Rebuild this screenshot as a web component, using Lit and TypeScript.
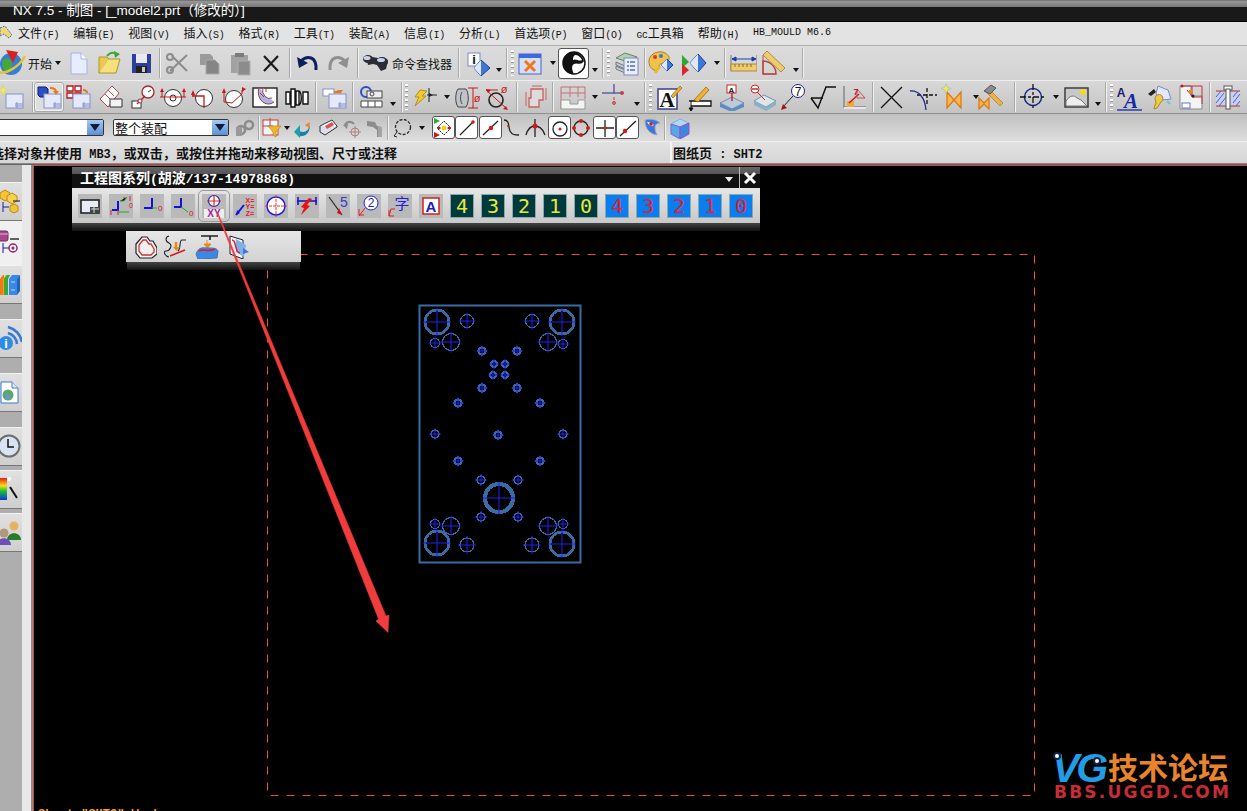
import { LitElement, html, svg, css } from 'lit';
import { customElement } from 'lit/decorators.js';

type Item = { c: number; n: string; w?: number; t?: string; mode?: 'on' | 'box' | 'wbox' };

const sheet = svg`<rect x="9" y="11" width="17" height="14" fill="#e4e9fb" stroke="#8592c8"/><path d="M18 21h8M18 23h8M20 19v6" stroke="#8592c8" fill="none"/>`;
const gray = '#8c8c8c';
const COMMA = '\uFF0C';

// toolbar icons, drawn on their row's own size
const icons: Record<string, unknown> = {
  globe: svg`<circle cx="13" cy="15" r="11" fill="#2f7fd8"/><path d="M5 11c4-3 8-1 9 3s-3 9-6 8-5-6-3-11z" fill="#46a83a"/><path d="M0 23c8 3 22-6 27-16" stroke="#e8c22c" stroke-width="2.5" fill="none"/><path d="M8 1l12 2-5 11z" fill="#d8201c"/>`,
  newfile: svg`<path d="M6 4h10l6 6v15H6z" fill="#e8ecff" stroke="#a4b0e4"/><path d="M16 4v6h6" fill="#fff" stroke="#a4b0e4"/>`,
  folder: svg`<path d="M4 24l3-14h18l-4 14z" fill="#f4e07c" stroke="#b09432"/><path d="M4 24V8h8l2 2" fill="#e8c850" stroke="#b09432"/><path d="M12 7c3-4 7-4 9-2" stroke="#38a838" stroke-width="2" fill="none"/><path d="M19 2l6 3-5 4z" fill="#38a838"/>`,
  save: svg`<rect x="5" y="5" width="19" height="19" fill="#2c3f9c"/><rect x="9" y="5" width="11" height="9" fill="#e8e8f4"/><rect x="9" y="17" width="11" height="7" fill="#222"/><rect x="15" y="18" width="3" height="5" fill="#c8c8c8"/>`,
  scissors: svg`<path d="M6 22L23 6M8 7l15 15" stroke="${gray}" stroke-width="2"/><circle cx="6" cy="8" r="3" fill="none" stroke="${gray}" stroke-width="2"/><circle cx="6" cy="21" r="3" fill="none" stroke="${gray}" stroke-width="2"/>`,
  copy: svg`<path d="M5 5h10l3 3v8h-13z" fill="#9a9a9a"/><path d="M11 11h9l4 4v10H11z" fill="#858585" stroke="#aaa"/>`,
  paste: svg`<rect x="5" y="6" width="17" height="18" fill="#a2a2a2"/><rect x="9" y="4" width="9" height="4" fill="#7c7c7c"/><rect x="12" y="12" width="12" height="14" fill="#8c8c8c" stroke="#b0b0b0"/>`,
  del: svg`<path d="M7 7l14 15M21 7L7 22" stroke="#1c1c1c" stroke-width="2.2"/>`,
  undo: svg`<path d="M8 12c6-6 16-5 15 9" fill="none" stroke="#0c1f5c" stroke-width="3"/><path d="M4 8l2 11 9-5z" fill="#0c1f5c"/>`,
  redo: svg`<path d="M20 12c-6-6-16-5-15 9" fill="none" stroke="#8f8f8f" stroke-width="3"/><path d="M24 8l-2 11-9-5z" fill="#8f8f8f"/>`,
  binoc: svg`<path d="M4 7l12 2 10 2-2 9-5 2-4-6-4-1-5 1z" fill="#2c2c34"/><ellipse cx="6" cy="10" rx="5" ry="4" fill="#2c2c34"/><ellipse cx="20" cy="13" rx="6" ry="5" fill="#2c2c34"/><ellipse cx="5" cy="9" rx="3.500" ry="2" fill="#c8d4ec"/><ellipse cx="19" cy="11" rx="4" ry="2" fill="#c8d4ec"/>`,
  info: svg`<rect x="5" y="4" width="12" height="13" fill="#fff" stroke="#7a88c8"/><text x="11" y="15" class="svgb" font-size="13" fill="#111" text-anchor="middle">i</text><path d="M18 11l9 8-9 8-7-8z" fill="#3c78d8" stroke="#1c3c8c"/><path d="M18 11v16l-7-8z" fill="#dfe8fb"/>`,
  window: svg`<rect x="3" y="5" width="22" height="20" fill="#d4e0fa" stroke="#4464c8"/><rect x="3" y="5" width="22" height="4" fill="#3c68e0"/><path d="M9 12l10 10M19 12L9 22" stroke="#f07818" stroke-width="3"/>`,
  half: svg`<circle cx="14" cy="14" r="11" fill="#fff" stroke="#111" stroke-width="1.500"/><path d="M14 3a11 11 0 0 0 0 22c-2-4-3-8 0-10s7 2 10-3C23 7 18 3 14 3z" fill="#111"/><path d="M15 6c3 0 6 2 7 5-3 2-6-2-9 0 0-2 0-4 2-5z" fill="#fff"/>`,
  stack: svg`<path d="M3 9l9-5 12 4-9 5z" fill="#a8d8a8" stroke="#777"/><path d="M3 13l9 4v3l-9-4zM3 17l9 4v3l-9-4z" fill="#c4ccd4" stroke="#777"/><rect x="11" y="9" width="14" height="17" fill="#e8eefc" stroke="#7c88c4"/><path d="M14 13h8M14 17h8M14 21h8" stroke="#5a6cb8" stroke-width="1.5" stroke-dasharray="2 1 5 0"/>`,
  palette: svg`<path d="M2 12c0-6 7-10 13-9s9 6 6 9-8 1-9 5-1 6-5 4-5-5-5-9z" fill="#efc24c" stroke="#a8802c"/><circle cx="8" cy="8" r="2" fill="#d83838"/><circle cx="14" cy="7" r="2" fill="#3878d8"/><path d="M20 10l6 6-6 6-6-6z" fill="#3c78d8" stroke="#1c3c8c"/><path d="M20 10v12l-6-6z" fill="#dfe8fb"/><path d="M8 24l5-7" stroke="#e8b830" stroke-width="3"/>`,
  play: svg`<path d="M3 6l7 7-7 6z" fill="#2ca838"/><path d="M3 15l7 6-7 6z" fill="#d82828"/><path d="M19 5l8 9-8 9-8-9z" fill="#3c78d8" stroke="#1c3c8c"/><path d="M19 5v18l-8-9z" fill="#dfe8fb"/>`,
  ruler: svg`<path d="M3 10h24M3 10l4-2v4zM27 10l-4-2v4z" fill="#1c3ca8" stroke="#1c3ca8"/><path d="M2 6v16M28 6v16" stroke="#777"/><rect x="2" y="15" width="26" height="7" fill="#f0cc70" stroke="#a88c3c"/><path d="M6 15v3M10 15v3M14 15v3M18 15v3M22 15v3" stroke="#886c28"/>`,
  square: svg`<path d="M4 25V12a13 13 0 0 1 13 13z" fill="none" stroke="#b84848" stroke-width="1.5"/><path d="M4 25h13M4 25V6" stroke="#b84848"/><path d="M8 2l18 17-4 4L4 6z" fill="#f0cc70" stroke="#a88c3c"/>`,

  newsheet: svg`${sheet}<path d="M6 2l1.500 4 4 1-4 1.500L6 13l-1.500-4.500-4-1.500 4-1z" fill="#f4ee50" stroke="#c8c87c" stroke-width=".5"/>`,
  viewsel: svg`<path d="M3 4h8l2 2v8H5l-2-2z" fill="#2c50c4" stroke="#0c1c6c"/>${sheet}<path d="M15 5c4 0 6 1 6 4" stroke="#e87818" fill="none" stroke-width="2"/><path d="M18 8h6l-3 4z" fill="#e87818"/>`,
  redgrid: svg`<path d="M3 3h6v5H3zM11 3h6v5h-6zM3 10h6v5H3zM11 10h6v5h-6z" fill="#fff" stroke="#b81818" stroke-width="1.300"/>${sheet}<path d="M19 7c3 0 4 1 4 3" stroke="#e87818" fill="none" stroke-width="2"/>`,
  diag: svg`<path d="M3 16L15 3l7 7L11 24z" fill="#fff" stroke="#b84848"/><path d="M8 11l6 6M11 7l6 6" stroke="#b84848"/><path d="M13 19h12v8H13z" transform="translate(0,-3)" fill="#f4f4f4" stroke="#333"/>`,
  circs: svg`<rect x="3" y="18" width="9" height="7" fill="#fff" stroke="#333"/><circle cx="19" cy="9" r="6" fill="#fff" stroke="#a82828" stroke-width="1.300"/><path d="M8 21L16 13" stroke="#a82828" stroke-width="1.500"/><circle cx="11" cy="18" r="2" fill="#fff" stroke="#a82828"/><path d="M19 9l3-2" stroke="#333"/>`,
  cen1: svg`<circle cx="14" cy="15" r="8.500" fill="#fff" stroke="#333"/><circle cx="14" cy="15" r="3" fill="none" stroke="#333"/><path d="M1 14h26M3 8v6M25 8v6" stroke="#c81818"/><path d="M3 5l2 4H1zM25 5l2 4h-4z" fill="#c81818"/>`,
  cen2: svg`<circle cx="15" cy="15" r="8.500" fill="#fff" stroke="#333"/><path d="M3 13h12v12" stroke="#c81818" fill="none" stroke-width="1.300"/><path d="M3 5l2 5H1z" fill="#c81818" transform="translate(1,2)"/><path d="M4 9v4" stroke="#c81818"/>`,
  cen3: svg`<circle cx="14" cy="16" r="8.500" fill="#fff" stroke="#333"/><path d="M4 9v10l8 1 10-9v-4" stroke="#c81818" fill="none"/><path d="M4 5l2 5H2zM22 4l4 2-4 3z" fill="#c81818"/>`,
  hatch: svg`<rect x="2" y="5" width="24" height="19" fill="#fff" stroke="#222" stroke-width="1.400"/><path d="M8 5a10 12 0 0 0 15 14" fill="#a4b8e8" stroke="#a83838"/><path d="M12 5a7 8 0 0 0 9 10" fill="#fff" stroke="#a83838"/><path d="M15 5v4M9 10l4 4" stroke="#a83838"/>`,
  shaft: svg`<path d="M3 9h4v12H3zM8 6h4v18H8zM13 8h3v14h-3zM16 8c3 2 3 12 0 14M20 9h5v12h-5z" fill="#fff" stroke="#111" stroke-width="1.400"/>`,
  sheetup: svg`<rect x="3" y="6" width="11" height="7" fill="#fff" stroke="#8592c8"/>${sheet}<path d="M14 9h5" stroke="#e87818" stroke-width="2"/><path d="M17 7h6l-3 4z" fill="#e87818"/>`,
  cfg: svg`<circle cx="8" cy="9" r="5" fill="none" stroke="#2c4cc8" stroke-width="2"/><rect x="9" y="8" width="15" height="7" fill="#eee" stroke="#444"/><circle cx="14" cy="11" r="2" fill="none" stroke="#444"/><path d="M3 18h21v6H3zM10 18v6M17 18v6" fill="#fff" stroke="#444"/>`,
  bolt: svg`<path d="M18 5v14M16 12h10" stroke="#222"/><path d="M22 12l-4-2v4z" fill="#222"/><path d="M9 7l7 1-5 5 4 0-11 10 4-9h-4z" fill="#f0cc28" stroke="#b88c20"/>`,
  dia1: svg`<path d="M5 6h8c3 4 3 14 0 18H5c-3-4-3-14 0-18z" fill="#c0c4c8" stroke="#444"/><path d="M9 9c-2 4-2 8 0 12" stroke="#444" fill="none"/><path d="M15 5h10M15 25h10M20 5v20" stroke="#c81818"/><text x="24" y="19" class="svgt" font-size="11" fill="#c81818" text-anchor="middle">ø</text>`,
  dia2: svg`<circle cx="13" cy="17" r="7" fill="none" stroke="#222" stroke-width="1.600"/><path d="M3 7l20 18M3 7h12" stroke="#c81818"/><text x="21" y="10" class="svgt" font-size="11" fill="#c81818" text-anchor="middle">ø</text><path d="M3 6l5 1-3 3zM25 27l-5-1 3-3z" fill="#c81818"/>`,
  step: svg`<path d="M8 7h12v11h-4v7H6v-9h2z" transform="translate(1,-1)" fill="#dcdcdc" stroke="#c86060" stroke-width="1.300"/><path d="M4 9v14M24 5v12M10 3h10" stroke="#c86060"/>`,
  prof: svg`<path d="M3 4h24M3 10h24M3 4v22M12 4v10M20 4v10M27 4v12" stroke="#c47070" fill="none"/><path d="M3 17h9v4h8v-4h7v9H3z" fill="#f4f4f4" stroke="#999"/>`,
  axis: svg`<path d="M1 10h20M13 1v10" stroke="#6060a8" stroke-width="1.500"/><circle cx="21" cy="10" r="2" fill="#c84040"/><path d="M13 14v8" stroke="#c84040" stroke-dasharray="3 1"/><circle cx="13" cy="20" r="1.500" fill="none" stroke="#c84040"/>`,
  note: svg`<rect x="4" y="6" width="19" height="20" fill="#fff" stroke="#3c3c8c" stroke-width="1.500"/><text x="13" y="24" class="svgs" font-size="21" fill="#111" text-anchor="middle">A</text><path d="M17 13L26 3l2 2-9 10z" fill="#f0b030" stroke="#8c6010" stroke-width=".7"/>`,
  pen: svg`<path d="M5 18h22v5H7" fill="#fff" stroke="#111" stroke-width="1.300"/><path d="M7 18v9M5 25l2 3 2-3z" stroke="#111"/><path d="M10 17L22 4l3 3-11 12z" fill="#f0b030" stroke="#8c6010" stroke-width=".7"/>`,
  datum: svg`<path d="M2 20l12-6 12 6-12 6z" fill="#bccadc" stroke="#7c8ca0"/><path d="M2 20v4l12 5 12-5v-4l-12 6z" fill="#5c8cc4"/><rect x="9" y="2" width="9" height="8" fill="#fff" stroke="#c82828"/><text x="13.500" y="9.500" class="svgb" font-size="8" fill="#222" text-anchor="middle">A</text><path d="M14 10v8" stroke="#c82828" stroke-width="1.500"/>`,
  minus: svg`<path d="M6 18l10-6 12 6-10 6z" fill="#dce6ee" stroke="#7c8ca0"/><path d="M6 18v4l12 6 10-6v-4l-10 6z" fill="#8cb0c8"/><circle cx="7" cy="6" r="4" fill="#fff" stroke="#c82828"/><path d="M4 6h6" stroke="#c82828" stroke-width="1.500"/><path d="M9 9l8 8" stroke="#c82828"/>`,
  seven: svg`<circle cx="19" cy="8" r="6.500" fill="#fff" stroke="#22228c"/><text x="19" y="12.500" class="svgt" font-size="12" fill="#111" text-anchor="middle">7</text><path d="M14 13L3 25" stroke="#222"/><path d="M2 27l2-6 4 4z" fill="#a81818"/>`,
  root: svg`<path d="M2 15l7 10L17 4h10" stroke="#111" stroke-width="1.500" fill="none"/><path d="M2 15h12" stroke="#111" stroke-width="1.500"/>`,
  angle: svg`<path d="M5 3v21h22" stroke="#888" stroke-width="1.500" fill="none"/><rect x="5" y="24" width="22" height="2" fill="#e4e4f4"/><rect x="8" y="18" width="7" height="6" fill="#f0a838"/><path d="M10 20l10-9" stroke="#c81818" stroke-width="1.500"/><path d="M18 6l8 9h-8z" fill="none" stroke="#c85050"/><text x="17" y="12" class="svgb" font-size="9" fill="#c81818" text-anchor="middle">7</text>`,
  cross: svg`<path d="M4 4l21 21M25 4L4 25" stroke="#111" stroke-width="1.300"/>`,
  crossarc: svg`<path d="M18 5v18M8 12h20" stroke="#111" stroke-dasharray="4 2" stroke-width="1.300"/><path d="M1 8c8-1 15 6 16 19" stroke="#1c2c8c" stroke-width="1.300" fill="none"/>`,
  bow: svg`<path d="M10 12l7 8 7-8v16l-7-8-7 8z" transform="translate(-2,-3)" fill="#f8b848" stroke="#e07818" stroke-width="1.300"/><path d="M7 1l1.500 3.500 3.500 1-3.500 1.500L7 11 5.500 7 2 5.500l3.500-1z" fill="#e8ee50" stroke="#a8a8a8" stroke-width=".5"/>`,
  bowham: svg`<path d="M3 15l5 5 5-5v11l-5-5-5 5z" fill="#f8b848" stroke="#e07818" stroke-width="1.300"/><path d="M13 6l14 14-3 3L10 9z" fill="#f0b048" stroke="#a87820" stroke-width=".7"/><path d="M8 8l7-6 5 3-6 6z" fill="#8c8c8c" stroke="#555"/>`,
  target: svg`<circle cx="14" cy="14" r="8.500" fill="none" stroke="#1c2c8c" stroke-width="1.500"/><path d="M1 14h26M14 1v26" stroke="#111" stroke-dasharray="6 2 3 2" stroke-width="1.300"/>`,
  photo: svg`<rect x="2" y="5" width="23" height="19" fill="#c8c8c8" stroke="#333" stroke-width="1.400"/><path d="M3 23v-5c4-6 8-6 11-3l4 2 6 6z" fill="#eee" stroke="#777"/><circle cx="20" cy="9" r="3" fill="#f8d818"/>`,
  aa: svg`<text x="6" y="14" class="svgb" font-size="12" fill="#1c1c70" text-anchor="middle">A</text><text x="16" y="25" class="svgi" font-size="21" fill="#1428a8" text-anchor="middle">A</text><path d="M2 27h25" stroke="#1428a8" stroke-width="1.300"/>`,
  keys: svg`<path d="M13 3l10 4 3 9-9 1-6-6z" fill="#e4e8ff" stroke="#7c88c8"/><path d="M3 11l6-5 2 3-5 4z" fill="#222"/><path d="M10 16a4 4 0 1 1 6 3l-4 6-3 1 1-4 1-2z" fill="#f0c848" stroke="#a88c28"/><path d="M22 18l3 3" stroke="#6ec8c8" stroke-width="2"/>`,
  frame: svg`<path d="M4 3h11v10h11v13H4z" fill="#f4f4f4" stroke="#888"/><rect x="6" y="20" width="8" height="5" fill="#fff" stroke="#6478c8"/><path d="M6 3h20v18M16 3v11h10M16 13l-5-6" fill="none" stroke="#c83030"/><circle cx="6" cy="3" r="1.500" fill="#c81818"/><circle cx="17" cy="13" r="1.500" fill="#222"/><rect x="13" y="7" width="3" height="3" fill="#f08818"/>`,
  bolt2: svg`<rect x="2" y="8" width="24" height="15" fill="#c8d0f0"/><path d="M2 20l8-10M2 14l5-6M5 23l8-10M19 20l7-9M19 14l5-6M22 23l4-5" stroke="#5060c8"/><path d="M2 8h24M2 23h24" stroke="#b83030"/><rect x="10" y="3" width="8" height="4" fill="#fff" stroke="#555"/><rect x="12" y="6" width="4" height="20" fill="#fff" stroke="#555"/>`,

  nx: svg`<path d="M0 3l5-2 7 9-3 3-5-4-4 2z" fill="#f0d870" stroke="#446cc8" stroke-dasharray="2 1"/>`,
  link: svg`<circle cx="7" cy="13" r="4" fill="none" stroke="#8c8c8c" stroke-width="2.500"/><circle cx="15" cy="8" r="4" fill="none" stroke="#8c8c8c" stroke-width="2.500"/><rect x="2" y="10" width="6" height="9" fill="#999"/>`,
  filter: svg`<rect x="2" y="3" width="15" height="15" fill="#f4f4f4" stroke="#c04040"/><path d="M9 1v10M2 9h10" stroke="#c04040"/><path d="M7 9h13l-5 6v5l-3-2v-3z" fill="#f0b828" stroke="#a08020" stroke-width=".6"/>`,
  back: svg`<path d="M7 13c5 4 11 2 12-6 0 9-4 13-12 12z" fill="#1880a8"/><path d="M9 8l-6 7 6 6z" fill="#20a0a8"/><path d="M14 8l5-3-1 6z" fill="#e88828"/>`,
  box3d: svg`<path d="M3 9l12-6 5 6-12 8z" fill="#fff" stroke="#333"/><path d="M3 9v6l5 3 12-8V9" fill="#dde" stroke="#333"/><path d="M8 9l7-4 2 3-7 4z" fill="#e05050"/>`,
  g1: svg`<path d="M5 8c2-4 7-4 9-1" stroke="#8c8c8c" stroke-width="2.200" fill="none"/><path d="M3 8l5-1-1 5z" fill="#8c8c8c"/><circle cx="15" cy="15" r="4" fill="none" stroke="#b08080"/><path d="M15 9v12M9 15h12" stroke="#b08080"/>`,
  g2: svg`<path d="M3 4l8 1 2 4 5 1v10h-5v-7l-4-3-6-1z" fill="#8c8c8c"/><path d="M14 10h4v10h-4z" fill="#a4a4a4"/>`,
  lasso: svg`<circle cx="12" cy="10" r="7.500" fill="none" stroke="#222" stroke-dasharray="3 1.500" stroke-width="1.300"/><path d="M6 15l-3 4 3 1" stroke="#222" fill="none"/>`,
  snapset: svg`<path d="M1 1l6 3-6 3z" fill="#2ca838"/><path d="M1 15l6 3-6 3z" fill="#c81818"/><path d="M11 4l7 7-7 7-7-7z" fill="#fff" stroke="#222" stroke-dasharray="2 1"/><circle cx="11" cy="11" r="2.500" fill="#f0d020"/><circle cx="6" cy="11" r="1.500" fill="#c81818"/><circle cx="16" cy="11" r="1.500" fill="#c81818"/>`,
  end1: svg`<path d="M4 18L17 5" stroke="#222" stroke-width="1.300"/><circle cx="17" cy="5" r="1.800" fill="#d81818"/>`,
  mid1: svg`<path d="M3 18L18 4" stroke="#222" stroke-width="1.300"/><circle cx="11" cy="11" r="2.200" fill="#d81818"/>`,
  curve: svg`<path d="M3 3c6 0 4 7 6 11 2 4 5 4 9 4" stroke="#222" stroke-width="1.300" fill="none"/><circle cx="7" cy="9" r="1" fill="#d81818"/>`,
  inter: svg`<path d="M2 18C4 11 8 9 11 9s8 2 10 9M11 2v18" stroke="#222" stroke-width="1.300" fill="none"/><circle cx="11" cy="9" r="2.500" fill="#d81818"/>`,
  cent: svg`<circle cx="11" cy="12" r="7" fill="none" stroke="#222" stroke-width="1.300"/><circle cx="11" cy="12" r="1.500" fill="#d81818"/>`,
  quad: svg`<circle cx="11" cy="11" r="7" fill="none" stroke="#222" stroke-width="1.300"/><circle cx="11" cy="4" r="2" fill="#d81818"/><circle cx="11" cy="18" r="2" fill="#d81818"/><circle cx="4" cy="11" r="2" fill="#d81818"/><circle cx="18" cy="11" r="2" fill="#d81818"/>`,
  plus: svg`<path d="M11 3v17M2 11h18" stroke="#222" stroke-width="1.300"/><circle cx="11" cy="11" r="1.500" fill="#d81818"/>`,
  low: svg`<path d="M3 19L19 4" stroke="#222" stroke-width="1.300"/><circle cx="8" cy="14" r="2.200" fill="#d81818"/>`,
  surf: svg`<path d="M5 3c6-2 12 0 15 3-6 0-6 6-3 12-6-1-12-5-12-15z" fill="#3878e0" stroke="#a8a8a8"/><path d="M7 5c3 0 5 1 7 3-2 2-5 1-7-3z" fill="#e8f0ff"/><circle cx="11" cy="7" r="1.800" fill="#d81818"/>`,
  cube: svg`<path d="M3 7l9-5 9 4-9 4z" fill="#b4d8f4" stroke="#7cb0e0"/><path d="M3 7v10l9 5V10z" fill="#58a8e8" stroke="#6c6cd0"/><path d="M12 10v12l9-5V6z" fill="#3c88e0" stroke="#a04cc8"/>`,
};

// floating window icons on 24px tiles
const tiles: Record<string, unknown> = {
  t1: svg`<rect x="3" y="6" width="18" height="13" fill="#e8ecf8" stroke="#222" stroke-width="1.600"/><rect x="12" y="13" width="9" height="6" fill="#444"/><path d="M13 15h8M16 13v6" stroke="#ddd"/>`,
  t2: svg`<path d="M9 7v9H3" stroke="#1010e0" stroke-width="2" fill="none"/><path d="M15 3v3M9 16v5M2 16v5M21 2v5" stroke="#e02020"/><path d="M11 7h4l3-4M9 18h11" stroke="#20b020"/><text x="20" y="14" class="svgt" font-size="7" fill="#d02020">0</text>`,
  t3: svg`<path d="M12 4v10H4" stroke="#1010e0" stroke-width="2" fill="none"/><path d="M12 14h5" stroke="#20b020"/><text x="18" y="17" class="svgt" font-size="8" fill="#d02020">0</text>`,
  t4: svg`<path d="M10 4v9H3" stroke="#1010e0" stroke-width="2" fill="none"/><path d="M10 13l7 5" stroke="#20b020"/><text x="18" y="22" class="svgt" font-size="8" fill="#d02020">0</text>`,
  t5: svg`<circle cx="12" cy="7" r="5.500" fill="#fff" stroke="#2020c0" stroke-width="1.200"/><path d="M5 7h14M12 1v12" stroke="#e02020" stroke-width="1.200"/><rect x="2" y="15" width="20" height="9" fill="#eee"/><text x="12" y="23" class="svgb" font-size="10" fill="#a020a0" text-anchor="middle">XY</text>`,
  t6: svg`<path d="M3 21L11 11" stroke="#1010e0" stroke-width="2"/><path d="M3 21l1-5 3 3z" fill="#1010e0"/><text x="17" y="9" class="svgb" font-size="7" fill="#e02020" text-anchor="middle">X=</text><text x="17" y="15" class="svgb" font-size="7" fill="#e02020" text-anchor="middle">Y=</text><text x="17" y="22" class="svgb" font-size="7" fill="#e02020" text-anchor="middle">Z=</text>`,
  t7: svg`<circle cx="12" cy="12" r="9" fill="#fff" stroke="#2020e0" stroke-width="1.500"/><path d="M1 12h22M12 1v22" stroke="#f03030" stroke-dasharray="3 1"/>`,
  t8: svg`<path d="M2 7h20M3 3v8M21 3v8" stroke="#1010c0" stroke-width="1.500"/><path d="M14 4l3 1-5 6 3 1-9 9 3-7-3-1z" fill="#e81010"/>`,
  t9: svg`<path d="M3 3l13 18" stroke="#222" stroke-width="1.200"/><path d="M13 14l3 7-5-2z" fill="#d01010"/><text x="18" y="13" class="svgt" font-size="14" fill="#3838d0" text-anchor="middle">5</text>`,
  t10: svg`<circle cx="14" cy="9" r="7" fill="#fff" stroke="#2020e0"/><text x="14" y="13" class="svgt" font-size="12" fill="#2020e0" text-anchor="middle">2</text><path d="M8 14L2 22" stroke="#e02020"/><path d="M2 15v6h5" stroke="#e02020" fill="none"/>`,
  t11: svg`<text x="14" y="15" class="svgc" font-size="15" fill="#2020e0" text-anchor="middle">字</text><path d="M3 15L1 22M3 15h4" stroke="#e02020" fill="none"/><path d="M1 16v6h5" stroke="#e02020" fill="none"/>`,
  t12: svg`<rect x="4" y="4" width="16" height="16" fill="#fff" stroke="#d02020" stroke-width="1.500"/><text x="12" y="18" class="svgb" font-size="15" fill="#2020c0" text-anchor="middle">A</text>`,
  s1: svg`<path d="M3 9l6-7h5l3 4h3l4 7v6l-5 4H7l-4-5z" fill="#f0f0f0" stroke="#222" stroke-width="1.200"/><path d="M6 10l4-5h3l3 4h2l3 5v3l-3 3H9l-3-4z" fill="none" stroke="#c83838" stroke-width="1.300"/>`,
  s2: svg`<path d="M5 1C1 2 1 6 5 8s1 8-3 8 0 6 3 6" stroke="#222" fill="none" stroke-width="1.100"/><path d="M22 5h-4c-3 0-1 9-4 11" stroke="#222" fill="none" stroke-width="1.100"/><path d="M12 7v6" stroke="#e88818" stroke-width="2.500"/><path d="M9 12h7l-3.500 4z" fill="#e88818"/><path d="M6 21l15-6" stroke="#d81818" stroke-width="1.500"/>`,
  s3: svg`<path d="M6 1h17M15 1v4" stroke="#222" stroke-width="1.600"/><path d="M12 5v4M9 9h7l-3.500 4z" stroke="#e88818" fill="#e88818"/><path d="M1 19c3-8 8-6 12-6 5 0 9 0 10 3l-1 7-19 1z" fill="#3c88e8" stroke="#5070a8"/><path d="M4 16c6-3 8 2 16-2" stroke="#e81818" stroke-width="1.500" fill="none"/>`,
  s4: svg`<path d="M4 1l13 4v19L4 19z" fill="#f0f4ff" stroke="#222"/><path d="M10 4l10 6-2 12-8-5z" fill="#80b0e8"/><path d="M6 5c5 0 2 12 8 13" stroke="#e02020" stroke-width="1.500" fill="none"/><path d="M17 13l6 4-6 2z" fill="#4078d0"/>`,
};

const sideArt = [
  svg`<path d="M0 6l5-3 5 3v5l-5 3-5-3z" fill="#f4c434" stroke="#b88c18"/><path d="M7 9l5-3 5 3v5l-5 3-5-3z" fill="#f8d050" stroke="#b88c18"/><path d="M3 15v10M3 20h6" stroke="#1c1c9c" fill="none"/><path d="M10 19l4-2 4 2v5l-4 2-4-2z" fill="#f4c434" stroke="#b88c18"/><path d="M13 14h7" stroke="#111"/>`,
  svg`<rect x="-2" y="5" width="10" height="10" rx="2" fill="#a8488c" stroke="#6c2c5c"/><path d="M-1 8h9" stroke="#e0b0d0"/><path d="M10 13h9" stroke="#111" stroke-width="1.300"/><path d="M3 17v10M3 22h6" stroke="#1c1c9c" fill="none"/><circle cx="13" cy="22" r="4" fill="none" stroke="#8c2870" stroke-width="1.500"/><circle cx="13" cy="22" r="1.500" fill="#8c2870"/>`,
  svg`<path d="M0 9l3-4h1v20H0z" fill="#f07818"/><path d="M3 9l3-4h3l-3 4v16H3z" fill="#e8a818"/><path d="M4 9l3-4h3l-2 4v16H4z" fill="#38a838"/><path d="M9 9l3-4h8l-3 4v16H9z" fill="#3888e8"/><path d="M17 9l3-4v16l-3 4z" fill="#1c64b8"/><path d="M11 12h4M11 20h4" stroke="#bcd8f8"/>`,
  svg`<path d="M8 9a13 13 0 0 1 9 11" stroke="#3878d8" stroke-width="2.500" fill="none"/><path d="M8 3a19 19 0 0 1 14 15" stroke="#3878d8" stroke-width="2.500" fill="none"/><circle cx="6" cy="19" r="7" fill="#2c8ce8"/><text x="6" y="24" class="svgb" font-size="13" fill="#fff" text-anchor="middle">i</text>`,
  svg`<path d="M1 4h11l6 6v15H1z" fill="#fff" stroke="#3878d8"/><path d="M12 4v6h6" fill="#e4ecfa" stroke="#3878d8"/><circle cx="8" cy="17" r="5.500" fill="#58a868"/><path d="M5 21l3-7 4 7z" fill="#6c98c8"/>`,
  svg`<circle cx="9" cy="14" r="10.500" fill="#d8e4f4" stroke="#6c6c6c" stroke-width="2"/><path d="M8 7v8h6" stroke="#111" stroke-width="1.500" fill="none"/>`,
  svg`<defs><linearGradient id="rainbow" x1="0" y1="0" x2="0" y2="1"><stop offset="0" stop-color="#f01818"/><stop offset=".35" stop-color="#f0e018"/><stop offset=".6" stop-color="#18c030"/><stop offset="1" stop-color="#1030e0"/></linearGradient></defs><path d="M0 3h7v22H0z" fill="url(#rainbow)"/><path d="M10 12l7 11" stroke="#111" stroke-width="2"/><circle cx="9" cy="4" r="2" fill="#fff"/>`,
  svg`<circle cx="14" cy="8" r="4.500" fill="#e8b060"/><path d="M7 22c0-9 14-9 14 0z" fill="#287c28"/><circle cx="4" cy="15" r="4.500" fill="#b09878"/><path d="M-3 27c0-9 14-9 14 0z" fill="#7050b8"/>`,
];

const row1: Item[] = [
  { c: 11, n: 'globe', w: 30 }, { c: 40, n: 'text', w: 24, t: '开始' }, { c: 57, n: 'arrow' }, { c: 79, n: 'newfile' }, { c: 109, n: 'folder' }, { c: 141, n: 'save' },
  { c: 160, n: 'sep' }, { c: 178, n: 'scissors' }, { c: 209, n: 'copy' }, { c: 240, n: 'paste' }, { c: 271, n: 'del' }, { c: 290, n: 'sep' },
  { c: 307, n: 'undo' }, { c: 339, n: 'redo' }, { c: 358, n: 'sep' }, { c: 376, n: 'binoc' }, { c: 422, n: 'text', w: 60, t: '命令查找器' }, { c: 459, n: 'sep' },
  { c: 477, n: 'info' }, { c: 498, n: 'arrowLow' }, { c: 507, n: 'sep' }, { c: 512, n: 'dots' }, { c: 530, n: 'window' }, { c: 552, n: 'arrow' },
  { c: 573, n: 'half', mode: 'wbox' }, { c: 594, n: 'arrowLow' }, { c: 603, n: 'sep' }, { c: 608, n: 'dots' }, { c: 627, n: 'stack' }, { c: 645, n: 'sep' },
  { c: 661, n: 'palette' }, { c: 693, n: 'play' }, { c: 716, n: 'arrow' }, { c: 725, n: 'sep' }, { c: 743, n: 'ruler' }, { c: 773, n: 'square' }, { c: 795, n: 'arrowLow' }, { c: 803, n: 'sep' },
];

const row2: Item[] = [
  { c: 11, n: 'newsheet' }, { c: 33, n: 'sep' }, { c: 49, n: 'viewsel', mode: 'on' }, { c: 78, n: 'redgrid' }, { c: 111, n: 'diag' }, { c: 143, n: 'circs' },
  { c: 173, n: 'cen1' }, { c: 203, n: 'cen2' }, { c: 234, n: 'cen3' }, { c: 265, n: 'hatch' }, { c: 297, n: 'shaft' }, { c: 316, n: 'sep' },
  { c: 334, n: 'sheetup' }, { c: 353, n: 'sep' }, { c: 372, n: 'cfg' }, { c: 392, n: 'arrowLow' }, { c: 402, n: 'sep' }, { c: 406, n: 'dots' }, { c: 425, n: 'bolt' }, { c: 446, n: 'arrow' },
  { c: 467, n: 'dia1' }, { c: 497, n: 'dia2' }, { c: 517, n: 'sep' }, { c: 536, n: 'step' }, { c: 553, n: 'sep' }, { c: 572, n: 'prof' }, { c: 594, n: 'arrow' },
  { c: 615, n: 'axis' }, { c: 636, n: 'arrowLow' }, { c: 645, n: 'sep' }, { c: 650, n: 'dots' }, { c: 668, n: 'note' }, { c: 698, n: 'pen' }, { c: 732, n: 'datum' },
  { c: 762, n: 'minus' }, { c: 793, n: 'seven' }, { c: 823, n: 'root' }, { c: 853, n: 'angle' }, { c: 873, n: 'sep' }, { c: 891, n: 'cross' }, { c: 923, n: 'crossarc' },
  { c: 953, n: 'bow' }, { c: 975, n: 'arrow' }, { c: 990, n: 'bowham' }, { c: 1015, n: 'sep' }, { c: 1033, n: 'target' }, { c: 1055, n: 'arrow' }, { c: 1077, n: 'photo' },
  { c: 1097, n: 'arrowLow' }, { c: 1106, n: 'sep' }, { c: 1111, n: 'dots' }, { c: 1129, n: 'aa' }, { c: 1159, n: 'keys' }, { c: 1190, n: 'frame' }, { c: 1210, n: 'sep' }, { c: 1228, n: 'bolt2' },
];

const row3: Item[] = [
  { c: 50, n: 'combo', w: 108, t: '' }, { c: 171, n: 'combo', w: 116, t: '整个装配' }, { c: 245, n: 'link' }, { c: 259, n: 'sep' }, { c: 272, n: 'filter' }, { c: 286, n: 'arrow' },
  { c: 302, n: 'back' }, { c: 328, n: 'box3d' }, { c: 351, n: 'g1' }, { c: 375, n: 'g2' }, { c: 388, n: 'sep' }, { c: 402, n: 'lasso' }, { c: 421, n: 'arrow' },
  { c: 443, n: 'snapset', mode: 'box' }, { c: 466, n: 'end1', mode: 'box' }, { c: 490, n: 'mid1', mode: 'box' }, { c: 512, n: 'curve' }, { c: 535, n: 'inter' },
  { c: 559, n: 'cent', mode: 'box' }, { c: 581, n: 'quad' }, { c: 604, n: 'plus', mode: 'box' }, { c: 627, n: 'low', mode: 'box' }, { c: 651, n: 'surf' }, { c: 665, n: 'sep' }, { c: 679, n: 'cube' },
];

const menus: [string, string][] = [
  ['文件', '(F)'], ['编辑', '(E)'], ['视图', '(V)'], ['插入', '(S)'], ['格式', '(R)'], ['工具', '(T)'], ['装配', '(A)'],
  ['信息', '(I)'], ['分析', '(L)'], ['首选项', '(P)'], ['窗口', '(O)'],
];

const holes = [
  ...[[467, 321, 6.5], [532, 321, 6.5], [451, 342, 8.5], [548, 342, 8.5], [451, 526, 8.5], [548, 526, 8.5], [467, 545, 7], [532, 545, 7]].map((h) => [...h, 1.2]),
  ...[[437, 322, 12], [562, 322, 12], [437, 543, 12], [562, 544, 12]].map((h) => [...h, 2.8]),
  [499, 498, 14, 4],
  ...[[435, 343, 4.5], [563, 344, 4.5], [435, 524, 4.5], [563, 524, 4.5], [435, 434, 4], [563, 434, 4], [481, 480, 4], [518, 480, 4], [481, 517, 4], [518, 517, 4]].map((h) => [...h, 1.4]),
  ...[[482, 351, 3.5], [517, 351, 3.5], [482, 388, 3.5], [517, 388, 3.5], [458, 403, 3.5], [540, 403, 3.5], [498, 435, 3.5], [458, 461, 3.5], [540, 461, 3.5], [494, 364, 3], [505, 364, 3], [493, 375, 3], [505, 375, 3]].map((h) => [...h, 2.4]),
];

@customElement('app-root')
export class AppRoot extends LitElement {
  static styles = css`
    :host {
      display: block;
      width: 1247px;
      height: 811px;
      overflow: hidden;
      background: #000;
      font-family: 'Noto Sans CJK SC', sans-serif;
      color: #111;
    }
    .title {
      height: 22px;
      background: linear-gradient(#555 0, #999 1px, #777 7px, #191919 7px, #191919 21px, #000 21px);
      color: #fff;
      font: 13.5px/21px 'Liberation Sans', 'Noto Sans CJK SC', sans-serif;
      padding-left: 13px;
      white-space: pre;
    }
    .menu {
      height: 21px;
      padding-bottom: 2px;
      display: flex;
      align-items: center;
      gap: 14px;
      padding-left: 18px;
      background: #e3e3e3;
      border-bottom: 1px solid #b0b0b0;
      font-size: 12px;
      position: relative;
    }
    .menu svg { position: absolute; left: 0; top: 3px; }
    .key { font: 10px 'Liberation Mono', monospace; letter-spacing: -.3px; }
    .gc { font: 9.5px 'Liberation Mono', monospace; }
    .hb { font: 10px 'Liberation Mono', monospace; }
    .row { display: flex; align-items: center; overflow: hidden; }
    .r1 { height: 34px; background: linear-gradient(#dcdcdc, #d2d2d2); }
    .r2 { height: 32px; background: linear-gradient(#d8d8d8, #c4c4c4); border-top: 1px solid #eee; border-bottom: 1px solid #8f8f8f; }
    .r3 { height: 27px; background: linear-gradient(#c0c0c0, #dedede); border-bottom: 1px solid #eee; }
    .slot { flex: none; display: flex; justify-content: flex-end; align-items: center; }
    .slot svg { display: block; flex: none; }
    .label { font-size: 12px; white-space: nowrap; flex: none; }
    .sep { flex: none; width: 2px; height: 30px; background: linear-gradient(90deg, #a8a8a8 50%, #f2f2f2 50%); }
    .r3 .sep { height: 24px; }
    .dots { flex: none; width: 3px; height: 26px; background: repeating-linear-gradient(#fff 0 2px, #999 2px 3px, transparent 3px 5px); }
    .arrow { flex: none; width: 0; height: 0; border: 3.5px solid transparent; border-top: 4px solid #111; border-bottom: 0; }
    .low { margin-top: 14px; }
    .on { flex: none; display: flex; align-items: center; justify-content: center; width: 30px; height: 30px; box-sizing: border-box; border: 1px solid #a8a8a8; border-radius: 3px; background: #dedede; box-shadow: inset 0 0 0 1px #f2f2f2; }
    .box { flex: none; display: flex; align-items: center; justify-content: center; width: 23px; height: 23px; box-sizing: border-box; border: 1px solid #555; border-radius: 3px; background: #fff; }
    .wbox { flex: none; display: flex; align-items: center; justify-content: center; width: 31px; height: 31px; box-sizing: border-box; border: 1px solid #555; border-radius: 3px; background: #fff; }
    .combo { flex: none; box-sizing: border-box; height: 17px; display: flex; align-items: center; background: #fff; border: 1px solid #333; border-radius: 2px; font-size: 13px; padding-left: 1px; justify-content: space-between; overflow: hidden; white-space: nowrap; }
    .drop { flex: none; width: 16px; height: 15px; background: linear-gradient(#a8c8f0, #5c90d8); display: flex; align-items: center; justify-content: center; }
    .drop::after { content: ''; border: 5px solid transparent; border-top: 7px solid #0c1c3c; border-bottom: 0; }
    .status { height: 21px; display: flex; align-items: center; background: linear-gradient(#e2e2e2, #d6d6d6); border-bottom: 1px solid #888; font-size: 13px; font-weight: 700; white-space: pre; }
    .msg { flex: none; width: 670px; margin-left: -9px; }
    .status .b { font: 700 12px 'Liberation Mono', monospace; }
    .sheet { flex: 1; height: 100%; line-height: 21px; border-left: 2px solid #f4f4f4; padding-left: 1px; margin-left: 9px; }
    .edge { height: 1px; background: #666; }
    .main { display: flex; height: 646px; }
    .side { flex: none; width: 22px; background: #aeaeae; display: flex; flex-direction: column; padding-top: 17px; overflow: hidden; }
    .side div { flex: none; height: 39px; background: linear-gradient(#e0e0e0, #cfcfcf); border-bottom: 1px solid #777; border-top: 1px solid #f2f2f2; box-sizing: border-box; position: relative; }
    .side svg { position: absolute; right: 0; top: 4px; }
    .side .hot { background: #f0f0f0; border-color: #f0f0f0; height: 44px; }
    .side .gap { margin-top: 15px; }
    .side .gap3 { margin-top: 4px; }
    .strip { flex: none; width: 9px; background: #e8e8e8; border-right: 2px solid #8c8c8c; }
    .canvas { flex: 1; position: relative; background: #000; border-left: 1px solid #c44; border-top: 1px solid #c44; overflow: hidden; }
    .layer { position: absolute; left: -1px; top: -1px; }
    .win { position: absolute; left: 38px; top: 1px; width: 688px; height: 64px; }
    .wtitle { height: 21px; box-sizing: border-box; background: linear-gradient(#666 0, #555 7px, #111 7px); color: #fff; font: 700 13px/20px 'Liberation Mono', monospace; padding-left: 8px; display: flex; justify-content: space-between; white-space: pre; }
    .wtitle .cn { font: 700 14px/20px 'Noto Sans CJK SC', sans-serif; }
    .wbtns { display: flex; align-items: center; }
    .wdrop { border: 4px solid transparent; border-top: 5px solid #eee; border-bottom: 0; margin: 4px 6px 0 0; }
    .wclose { width: 20px; height: 21px; border-left: 1px solid #bbb; display: flex; align-items: center; justify-content: center; }
    .wbody { height: 35px; display: flex; align-items: center; gap: 7px; padding-left: 6px; background: linear-gradient(#e6e6e6, #c8c8c8); }
    .wfoot { height: 8px; background: linear-gradient(#444, #111); }
    .tile { flex: none; width: 24px; height: 24px; background: #b9b9b9; }
    .tile svg { display: block; }
    .tsel { flex: none; width: 24px; height: 24px; outline: 1px solid #999; outline-offset: 3px; border-radius: 1px; background: #b9b9b9; }
    .digit { flex: none; width: 24px; height: 24px; box-sizing: border-box; border: 1px solid #8aa; font: 20px/22px 'DejaVu Sans Mono', monospace; text-align: center; }
    .dark { background: #003a3c; color: #e8e83c; }
    .blue { background: #0a7ef0; color: #e81c2c; }
    .sub { position: absolute; left: 92px; top: 65px; width: 175px; }
    .sbody { height: 31px; display: flex; align-items: center; gap: 7px; padding-left: 7px; background: linear-gradient(#e6e6e6, #d2d2d2); }
    .sbody svg { flex: none; }
    .sfoot { height: 8px; margin: 0 1px; background: linear-gradient(#444, #111); }
    .logo { position: absolute; left: 1018px; top: 584px; width: 181px; height: 50px; display: flex; flex-direction: column; }
    .ltop { display: flex; align-items: flex-start; height: 35px; white-space: nowrap; }
    .vg { font: italic 700 41px/36px 'Liberation Sans', sans-serif; color: #229ce4; width: 56px; letter-spacing: -3px; }
    .zh { font: 700 30px/33px 'Noto Sans CJK SC', sans-serif; color: #e8842c; }
    .bbs { font: 700 17px/15px 'DejaVu Sans', sans-serif; color: #c82c34; letter-spacing: 2.2px; white-space: nowrap; padding-left: 2px; }
    .eye { position: absolute; width: 8px; height: 8px; border-radius: 50%; background: #fff; border: 2px solid #124; box-sizing: border-box; }
    .e1 { left: 1px; top: 2px; }
    .e2 { left: 41px; top: 7px; }
    .foot { position: absolute; left: 4px; top: 643px; font: 700 12px/12px 'Liberation Mono', monospace; color: #f4a040; white-space: pre; }
    .svgt { font-family: 'Liberation Sans', sans-serif; }
    .svgb { font-family: 'Liberation Sans', sans-serif; font-weight: 700; }
    .svgs { font-family: 'Liberation Serif', serif; font-weight: 700; }
    .svgi { font-family: 'Liberation Serif', serif; font-weight: 700; font-style: italic; }
    .svgc { font-family: 'Noto Sans CJK SC', sans-serif; }
  `;

  private icon(name: string, size: number) {
    return html`<svg width=${size} height=${size} viewBox="0 0 ${size} ${size}">${icons[name]}</svg>`;
  }

  private itemWidth(it: Item, size: number) {
    if (it.w) return it.w;
    if (it.n === 'sep') return 2;
    if (it.n === 'dots') return 3;
    if (it.n.startsWith('arrow')) return 7;
    if (it.mode === 'on') return 30;
    if (it.mode === 'box') return 23;
    if (it.mode === 'wbox') return 31;
    return size;
  }

  private item(it: Item, size: number) {
    if (it.n === 'sep') return html`<div class="sep"></div>`;
    if (it.n === 'dots') return html`<div class="dots"></div>`;
    if (it.n === 'arrow') return html`<div class="arrow"></div>`;
    if (it.n === 'arrowLow') return html`<div class="arrow low"></div>`;
    if (it.n === 'text') return html`<div class="label">${it.t}</div>`;
    if (it.n === 'combo') return html`<div class="combo" style="width:${it.w}px"><span>${it.t}</span><span class="drop"></span></div>`;
    if (it.mode === 'on') return html`<div class="on">${this.icon(it.n, size)}</div>`;
    if (it.mode === 'box') return html`<div class="box">${this.icon(it.n, size)}</div>`;
    if (it.mode === 'wbox') return html`<div class="wbox">${this.icon(it.n, size)}</div>`;
    return this.icon(it.n, size);
  }

  // every slot ends at its item's right edge, so the centre values in the data hold
  private toolbar(items: Item[], cls: string, size: number) {
    let prev = 0;
    return html`<div class="row ${cls}">
      ${items.map((it) => {
        const w = this.itemWidth(it, size);
        const right = it.c + Math.round(w / 2);
        const slot = right - prev;
        prev = right;
        return html`<div class="slot" style="width:${slot}px">${this.item(it, size)}</div>`;
      })}
    </div>`;
  }

  private tile(name: string, size = 24) {
    return html`<svg width=${size} height=${size} viewBox="0 0 24 24">${tiles[name]}</svg>`;
  }

  private sideIcon(kind: number) {
    return html`<svg width="22" height="32" viewBox="0 0 22 32">${sideArt[kind]}</svg>`;
  }

  render() {
    const titles = ['t1', 't2', 't3', 't4', 't5', 't6', 't7', 't8', 't9', 't10', 't11', 't12'];
    return html`
      <div class="title">NX 7.5 - 制图 - [_model2.prt（修改的）]</div>
      <div class="menu">
        <svg width="12" height="14" viewBox="0 0 12 14">${icons.nx}</svg>
        ${menus.map(([m, k]) => html`<span>${m}<span class="key">${k}</span></span>`)}
        <span><span class="gc">GC</span>工具箱</span>
        <span>帮助<span class="key">(H)</span></span>
        <span class="hb">HB_MOULD M6.6</span>
      </div>
      ${this.toolbar(row1, 'r1', 28)} ${this.toolbar(row2, 'r2', 28)} ${this.toolbar(row3, 'r3', 22)}
      <div class="status">
        <div class="msg">选择对象并使用<span class="b"> MB3</span>${COMMA}或双击${COMMA}或按住并拖动来移动视图、尺寸或注释</div>
        <div class="sheet">图纸页<span class="b"> : SHT2</span></div>
      </div>
      <div class="edge"></div>
      <div class="main">
        <div class="side">
          <div>${this.sideIcon(0)}</div>
          <div class="hot">${this.sideIcon(1)}</div>
          <div>${this.sideIcon(2)}</div>
          <div class="gap">${this.sideIcon(3)}</div>
          <div class="gap">${this.sideIcon(4)}</div>
          <div class="gap">${this.sideIcon(5)}</div>
          <div class="gap3">${this.sideIcon(6)}</div>
          <div class="gap3">${this.sideIcon(7)}</div>
        </div>
        <div class="strip"></div>
        <div class="canvas">
          <svg class="layer" width="1214" height="646" viewBox="33 165 1214 646">
            <rect x="267.500" y="254.500" width="767" height="541" fill="none" stroke="#e85050" stroke-dasharray="8 8"/>
            <rect x="419.500" y="305.500" width="161" height="257" fill="none" stroke="#3a6ba4" stroke-width="2"/>
            ${holes.map(([x, y, r, t]) => svg`
              <circle cx=${x} cy=${y} r=${r} fill="none" stroke="#3a6ba4" stroke-width=${t} shape-rendering="crispEdges"/>
              <path d="M${x - r - 2} ${y}h${2 * r + 4}M${x} ${y - r - 2}v${2 * r + 4}" stroke="#2020f0"/>`)}
          </svg>
          <div class="win">
            <div class="wtitle">
              <span><span class="cn">工程图系列</span>(<span class="cn">胡波</span>/137-14978868)</span>
              <span class="wbtns">
                <span class="wdrop"></span>
                <span class="wclose"><svg width="14" height="14" viewBox="0 0 14 14"><path d="M2 2l10 10M12 2L2 12" stroke="#fff" stroke-width="3"/></svg></span>
              </span>
            </div>
            <div class="wbody">
              ${titles.map((t, i) => html`<div class=${i === 4 ? 'tsel' : 'tile'}>${this.tile(t)}</div>`)}
              ${['4', '3', '2', '1', '0'].map((d) => html`<div class="digit dark">${d}</div>`)}
              ${['4', '3', '2', '1', '0'].map((d) => html`<div class="digit blue">${d}</div>`)}
            </div>
            <div class="wfoot"></div>
          </div>
          <div class="sub">
            <div class="sbody">${['s1', 's2', 's3', 's4'].map((t) => this.tile(t))}</div>
            <div class="sfoot"></div>
          </div>
          <svg class="layer" width="1214" height="646" viewBox="33 165 1214 646">
            <path d="M217 213L378.500 619 376 621 388 632.500 389 615 386 616 218 213z" fill="#f03c3c" stroke="#f03c3c" stroke-width=".5"/>
          </svg>
          <div class="logo">
            <div class="ltop"><span class="vg">VG</span><span class="zh">技术论坛</span></div>
            <div class="bbs">BBS.UGGD.COM</div>
            <span class="eye e1"></span><span class="eye e2"></span>
          </div>
          <div class="foot">Sheet "SHT2" Work</div>
        </div>
      </div>
    `;
  }
}
